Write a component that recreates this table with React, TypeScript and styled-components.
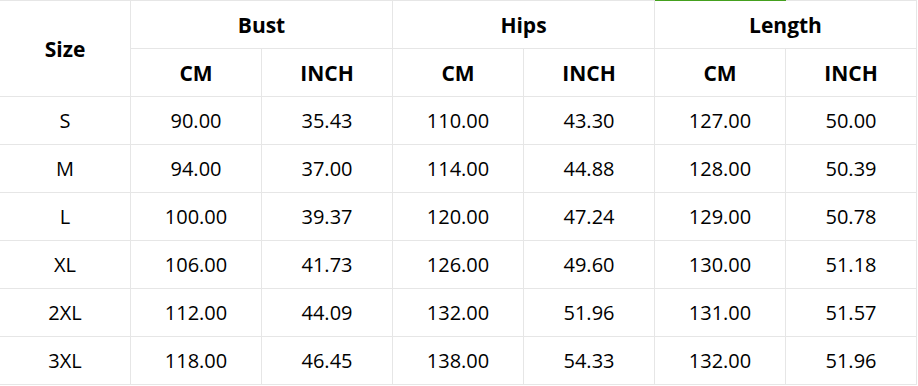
import React from 'react'
import styled, { createGlobalStyle } from 'styled-components'

const GlobalStyle = createGlobalStyle`
  html, body {
    margin: 0;
    padding: 0;
    background: #ffffff;
  }
  body {
    font-family: "Open Sans", "Noto Sans", sans-serif;
  }
`

const Grid = styled.div`
  display: grid;
  grid-template-columns: repeat(7, 130px);
  grid-auto-rows: 47px;
  gap: 1px;
  padding: 1px 1px 1px 0;
  width: max-content;
  background: #e6e6e6;
`

const Cell = styled.div<{ $head?: boolean; $rows?: number; $cols?: number }>`
  position: relative;
  display: flex;
  align-items: center;
  justify-content: center;
  background: #ffffff;
  color: #000000;
  font-size: ${(p) => (p.$head ? '21px' : '20px')};
  font-weight: ${(p) => (p.$head ? 700 : 400)};
  grid-row: ${(p) => (p.$rows ? `span ${p.$rows}` : 'auto')};
  grid-column: ${(p) => (p.$cols ? `span ${p.$cols}` : 'auto')};
`

const MarkedCell = styled(Cell)`
  &::before {
    content: '';
    position: absolute;
    top: -1px;
    left: 0;
    width: 131px;
    height: 1px;
    background: #44a01e;
  }
`

const rows = [
  ['S', '90.00', '35.43', '110.00', '43.30', '127.00', '50.00'],
  ['M', '94.00', '37.00', '114.00', '44.88', '128.00', '50.39'],
  ['L', '100.00', '39.37', '120.00', '47.24', '129.00', '50.78'],
  ['XL', '106.00', '41.73', '126.00', '49.60', '130.00', '51.18'],
  ['2XL', '112.00', '44.09', '132.00', '51.96', '131.00', '51.57'],
  ['3XL', '118.00', '46.45', '138.00', '54.33', '132.00', '51.96'],
]

function App() {
  return (
    <>
      <GlobalStyle />
      <Grid>
        <Cell $head $rows={2}>Size</Cell>
        <Cell $head $cols={2}>Bust</Cell>
        <Cell $head $cols={2}>Hips</Cell>
        <MarkedCell $head $cols={2}>Length</MarkedCell>
        {['CM', 'INCH', 'CM', 'INCH', 'CM', 'INCH'].map((u, i) => (
          <Cell $head key={i}>{u}</Cell>
        ))}
        {rows.map((r) =>
          r.map((v, i) => <Cell key={r[0] + i}>{v}</Cell>)
        )}
      </Grid>
    </>
  )
}

export default App
